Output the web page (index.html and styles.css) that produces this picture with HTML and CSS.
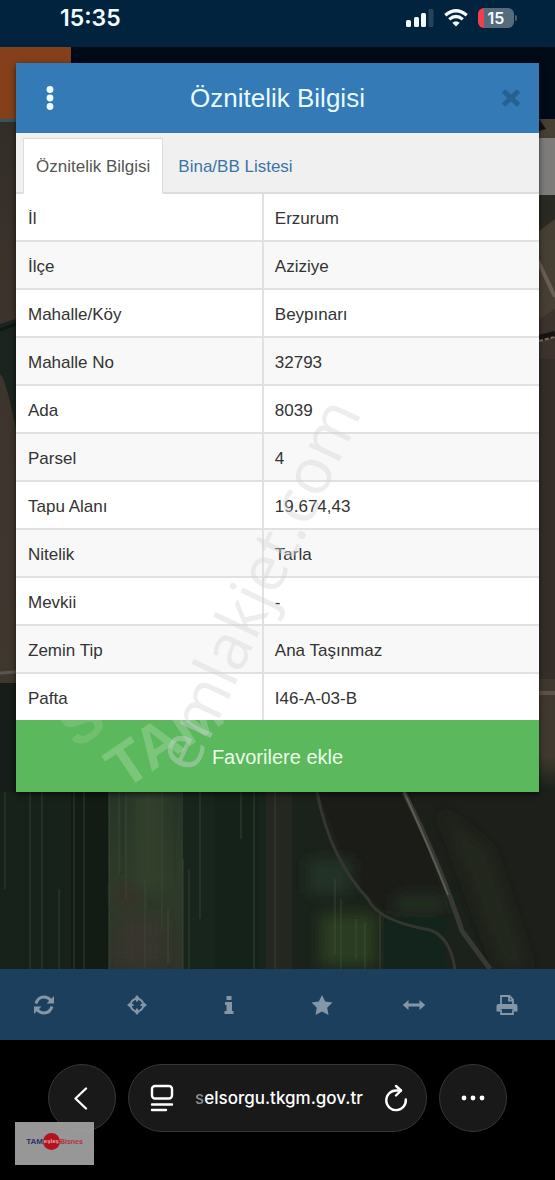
FILE: index.html
```html
<!DOCTYPE html>
<html lang="tr">
<head>
<meta charset="utf-8">
<meta name="viewport" content="width=device-width, initial-scale=1">
<title>Öznitelik Bilgisi</title>
<link rel="stylesheet" href="styles.css">
</head>
<body>
<header class="status">
  <time class="clock">15:35</time>
  <div class="indicators">
    <svg width="28" height="18" viewBox="0 0 28 18" aria-hidden="true">
      <g fill="#f2fbff"><rect x="0" y="11" width="5" height="7" rx="1.5"/><rect x="8" y="8" width="5" height="10" rx="1.5"/><rect x="15" y="4" width="5" height="14" rx="1.5"/></g>
      <rect x="22.500" y="0" width="5" height="18" rx="1.500" fill="#26435a"/>
    </svg>
    <svg width="24" height="18" viewBox="0 0 24 18" fill="none" stroke="#f2fbff" stroke-width="3.200" aria-hidden="true">
      <path d="M1.300 6.300Q12-2.800 22.700 6.300"/><path d="M5.200 10.400Q12 4.600 18.800 10.400"/><path d="M12 17.500L8.300 13.700Q12 10.700 15.700 13.700Z" fill="#f2fbff" stroke="none"/>
    </svg>
    <div class="battery"><span class="level">15</span></div>
  </div>
</header>

<main class="map">
  <div class="topstrip"><div class="brand"></div></div>
  <svg class="terrain" viewBox="0 0 555 850" preserveAspectRatio="none" aria-hidden="true">
    <defs>
      <linearGradient id="soil" x1="0" y1="0" x2="0" y2="1">
        <stop offset="0" stop-color="#322e27"/><stop offset=".2" stop-color="#3d332d"/><stop offset=".75" stop-color="#40392f"/><stop offset=".79" stop-color="#19211a"/><stop offset="1" stop-color="#171d18"/>
      </linearGradient>
      <linearGradient id="field" x1="0" y1="0" x2="0" y2="1">
        <stop offset="0" stop-color="#263528"/><stop offset=".5" stop-color="#2e3b29"/><stop offset="1" stop-color="#303329"/>
      </linearGradient>
      <filter id="soft" x="-40%" y="-40%" width="180%" height="180%"><feGaussianBlur stdDeviation="7"/></filter>
    </defs>
    <rect width="555" height="850" fill="url(#soil)"/>
    <path d="M0 205L16 200V310Q6 260 0 255Z" fill="#1b241e"/>
    <path d="M0 211L16 205" stroke="#111713" stroke-width="3"/>
    <path d="M0 554L16 553" stroke="#5b574f" stroke-width="3"/>
    <path d="M0 564H16V680H0Z" fill="#171d18"/>
    <path d="M539 0H555V190L539 200Z" fill="#463f33"/>
    <path d="M539 0L546 10L539 12Z" fill="#12100d"/>
    <path d="M539 76H555V100L539 112Z" fill="#292a22"/>
    <path d="M538 142L555 178" stroke="#6a5e51" stroke-width="4"/>
    <path d="M539 219L555 215" stroke="#17140f" stroke-width="6"/>
    <path d="M539 222L555 218" stroke="#77705f" stroke-width="2" stroke-dasharray="4 2"/>
    <path d="M539 240H555V560H539Z" fill="#352e28"/>
    <path d="M539 574H555" stroke="#5e5149" stroke-width="4"/>
    <rect x="0" y="673" width="110" height="177" fill="#17221b"/>
    <rect x="71" y="673" width="37" height="177" fill="#121b14"/>
    <rect x="109" y="673" width="74" height="177" fill="url(#field)"/>
    <g filter="url(#soft)">
      <rect x="120" y="800" width="42" height="44" fill="#38352d"/>
      <rect x="116" y="765" width="22" height="22" fill="#38332a"/>
      <rect x="135" y="670" width="28" height="100" fill="#30412b"/>
    </g>
    <rect x="183" y="673" width="83" height="177" fill="#18251c"/>
    <rect x="215" y="673" width="44" height="177" fill="#15221a"/>
    <rect x="266" y="673" width="26" height="177" fill="#242620"/>
    <rect x="292" y="673" width="263" height="177" fill="#1b221b"/>
    <path d="M318 673H410L450 800L380 790L350 755Z" fill="#1b1c18"/>
    <path d="M410 673H555V850H490Z" fill="#1c1f1a"/>
    <g filter="url(#soft)">
      <rect x="308" y="740" width="44" height="35" fill="#243027"/>
      <rect x="320" y="795" width="56" height="52" fill="#2b3e20"/>
      <rect x="395" y="775" width="50" height="20" fill="#202d20"/>
      <path d="M440 690L490 730L530 850H500Z" fill="#22251f"/>
    </g>
    <rect x="384" y="798" width="62" height="52" fill="#13241d"/>
    <g stroke="#3e4b38" stroke-width="1" opacity=".75">
      <path d="M5 673V770M30 673V850M42 673V850M59 770V850M74 673V850M84 673V850M109 673V850M119 673V755M126 673V780M162 673V810M145 760V850M183 740V850M200 673V800M189 750V850M241 673V720M254 673V850M275 673V850"/>
    </g>
    <g stroke="#51603c" stroke-width="1" opacity=".5"><path d="M335 760V835M341 780V850M356 800V840M365 803V850M380 795V850M168 790V845"/></g>
    <path d="M317 673Q330 740 368 780Q378 802 430 811Q450 818 455 850" fill="none" stroke="#35362f" stroke-width="3"/>
    <path d="M404 673Q440 745 462 812L490 850" fill="none" stroke="#383933" stroke-width="5"/>
    <path d="M404 673Q430 730 448 776" fill="none" stroke="#5d5a52" stroke-width="2"/>
  </svg>
  <div class="sidepanel"></div>

  <section class="dialog" aria-labelledby="dialog-title">
    <div class="dialog-head">
      <button class="head-btn" aria-label="Menü"><svg width="8" height="24" viewBox="0 0 8 24" fill="#eefcff"><circle cx="4" cy="3.500" r="3.400"/><circle cx="4" cy="12" r="3.400"/><circle cx="4" cy="20.500" r="3.400"/></svg></button>
      <h1 class="dialog-title" id="dialog-title">Öznitelik Bilgisi</h1>
      <button class="head-btn close" aria-label="Kapat"><svg width="20" height="20" viewBox="0 0 20 20" fill="none" stroke="#28608f" stroke-width="5"><path d="M2.500 3L17.500 17M17.500 3L2.500 17"/></svg></button>
    </div>
    <div class="tabs" role="tablist">
      <button class="tab active" role="tab" aria-selected="true">Öznitelik Bilgisi</button>
      <button class="tab" role="tab" aria-selected="false">Bina/BB Listesi</button>
    </div>
    <table class="attributes">
      <tbody>
        <tr><th scope="row">İl</th><td>Erzurum</td></tr>
        <tr><th scope="row">İlçe</th><td>Aziziye</td></tr>
        <tr><th scope="row">Mahalle/Köy</th><td>Beypınarı</td></tr>
        <tr><th scope="row">Mahalle No</th><td>32793</td></tr>
        <tr><th scope="row">Ada</th><td>8039</td></tr>
        <tr><th scope="row">Parsel</th><td>4</td></tr>
        <tr><th scope="row">Tapu Alanı</th><td>19.674,43</td></tr>
        <tr><th scope="row">Nitelik</th><td>Tarla</td></tr>
        <tr><th scope="row">Mevkii</th><td>-</td></tr>
        <tr><th scope="row">Zemin Tip</th><td>Ana Taşınmaz</td></tr>
        <tr><th scope="row">Pafta</th><td>I46-A-03-B</td></tr>
      </tbody>
    </table>
    <button class="favorite">Favorilere ekle</button>
    <svg class="watermark" viewBox="0 0 523 728" aria-hidden="true">
      <text class="mark-bold" transform="translate(108 727) rotate(-34)">TAM</text>
      <text class="mark-faint" transform="translate(60 686) rotate(-34)">S</text>
      <text class="mark" transform="translate(177 712) rotate(-65)">emlakjet.com</text>
    </svg>
  </section>
</main>

<nav class="toolbar" aria-label="Harita araçları">
  <button class="tool" aria-label="Yenile"><svg width="20" height="20" viewBox="0 0 20 20"><g fill="none" stroke="currentColor" stroke-width="3"><path d="M2 8.500Q4 2 10 2Q14 2 17 5.500"/><path d="M18 11.500Q16 18 10 18Q6 18 3 14.500"/></g><path d="M20 1V8.500H12.500ZM0 19V11.500H7.500Z" fill="currentColor"/></svg></button>
  <button class="tool" aria-label="Konum"><svg width="20" height="20" viewBox="0 0 20 20"><circle cx="10" cy="10" r="6.300" fill="none" stroke="currentColor" stroke-width="2"/><path d="M10 1V6.500M10 13.500V19M1 10H6.500M13.500 10H19" stroke="currentColor" stroke-width="2"/><path d="M10 0L12.500 3H7.500ZM10 20L7.500 17H12.500ZM0 10L3 7.500V12.500ZM20 10L17 12.500V7.500Z" fill="currentColor"/></svg></button>
  <button class="tool" aria-label="Bilgi"><svg width="20" height="20" viewBox="0 0 20 20" fill="currentColor"><path d="M7.500 1H12.500V5H7.500ZM6 7H13V16H14.500V19H5.500V16H7.500V10H6Z"/></svg></button>
  <button class="tool" aria-label="Favoriler"><svg width="22" height="20" viewBox="0 0 22 20" fill="currentColor"><path d="M11 0L14.200 6.600L21.500 7.600L16.200 12.700L17.500 20L11 16.500L4.500 20L5.800 12.700L.5 7.600L7.800 6.600Z"/></svg></button>
  <button class="tool" aria-label="Ölçüm"><svg width="24" height="20" viewBox="0 0 24 20"><path d="M4 10H20" stroke="currentColor" stroke-width="3"/><path d="M6.500 5V15L.8 10ZM17.500 5V15L23.200 10Z" fill="currentColor"/></svg></button>
  <button class="tool" aria-label="Yazdır"><svg width="22" height="20" viewBox="0 0 22 20"><path d="M5 9V1H13.500L17 4.500V9M13 1V5.500H17" fill="none" stroke="currentColor" stroke-width="1.800"/><path d="M2.500 9H19.500Q21.500 9 21.500 11V16.500H17.500V14H4.500V16.500H.5V11Q.5 9 2.500 9Z" fill="currentColor"/><path d="M5 14.500V19H17V14.500" fill="none" stroke="currentColor" stroke-width="1.800"/></svg></button>
</nav>

<footer class="browser">
  <button class="round" aria-label="Geri"><svg width="18" height="24" viewBox="0 0 18 24" fill="none" stroke="#fff" stroke-width="2.300" stroke-linecap="round" stroke-linejoin="round"><path d="M13 2.500L2.500 12.500L13 22.500"/></svg></button>
  <div class="address">
    <button class="plain" aria-label="Sayfa menüsü"><svg width="24" height="28" viewBox="0 0 24 28" fill="none" stroke="#fff" stroke-width="2.400" stroke-linecap="round"><rect x="2" y="2" width="20" height="12.500" rx="3"/><path d="M2 20.500H22M2 26H16"/></svg></button>
    <span class="url"><span class="fade">s</span>elsorgu.tkgm.gov.tr</span>
    <button class="plain" aria-label="Yeniden yükle"><svg width="24" height="28" viewBox="0 0 24 28" fill="none" stroke="#fff" stroke-width="2.400" stroke-linecap="round" stroke-linejoin="round"><path d="M21.800 15.500A9.800 9.800 0 1 1 12 6.500H17"/><path d="M12 2L17 6.500L12 11.500"/></svg></button>
  </div>
  <button class="round" aria-label="Diğer"><svg width="24" height="6" viewBox="0 0 24 6" fill="#fff"><circle cx="3" cy="3" r="2.400"/><circle cx="12" cy="3" r="2.400"/><circle cx="21" cy="3" r="2.400"/></svg></button>
  <div class="badge">
    <span class="badge-a">TAM</span><span class="badge-dot">eşleş</span><span class="badge-b">Bisnes</span>
  </div>
</footer>
</body>
</html>
```
FILE: styles.css
```css
* { box-sizing: border-box; }
body {
  margin: 0;
  min-height: 100vh;
  display: flex;
  flex-direction: column;
  background: #000;
  font-family: "Liberation Sans", Arial, sans-serif;
  font-size: 17px;
  color: #333;
}
button {
  margin: 0;
  padding: 0;
  border: 0;
  background: none;
  color: inherit;
  font: inherit;
}
svg { display: block; }

.status {
  height: 47px;
  padding: 0 41px 12px 60px;
  display: flex;
  align-items: center;
  justify-content: space-between;
  background: #02233d;
  color: #f2fbff;
  font-family: Inter, sans-serif;
}
.clock { font-size: 23px; font-weight: 600; }
.indicators { display: flex; align-items: center; gap: 10px; }
.battery {
  position: relative;
  width: 36px;
  height: 20px;
  border-radius: 6px;
  background: linear-gradient(90deg, #f13f4e 6px, #566b7c 6px);
  text-align: center;
}
.battery::after {
  content: "";
  position: absolute;
  left: 37px;
  top: 7px;
  width: 2px;
  height: 6px;
  border-radius: 0 2px 2px 0;
  background: #4a6072;
}
.level { display: block; font-size: 16px; line-height: 20px; font-weight: 600; }

.map {
  position: relative;
  flex: 1;
  padding: 16px 16px 176px;
  background: #171d18;
}
.topstrip {
  position: absolute;
  inset: 0 0 auto;
  z-index: 1;
  height: 72px;
  background: #010b18;
}
.brand {
  width: 71px;
  height: 75px;
  background: #85401b;
  border-bottom: 3px solid #315562;
}
.terrain {
  position: absolute;
  left: 0;
  top: 72px;
  width: 100%;
  height: calc(100% - 72px);
}
.sidepanel {
  position: absolute;
  right: 0;
  top: 91px;
  width: 40px;
  height: 57px;
  background: #7d7c7a;
}

.dialog {
  position: relative;
  z-index: 2;
  background: #fff;
  box-shadow: 0 2px 6px rgba(0, 0, 0, .6);
}
.dialog-head {
  height: 70px;
  padding: 0 18px;
  display: flex;
  align-items: center;
  justify-content: space-between;
  background: #337ab7;
}
.head-btn {
  width: 32px;
  height: 40px;
  display: flex;
  align-items: center;
  justify-content: center;
}
.close { justify-content: flex-end; }
.dialog-title {
  margin: 0;
  font-size: 26px;
  font-weight: 400;
  color: #e8faff;
}
.tabs {
  height: 61px;
  padding: 5px 7px 0;
  display: flex;
  gap: 2px;
  background: #f0f0f0;
  border-bottom: 2px solid #ddd;
}
.tab {
  height: 56px;
  padding: 2px 12px 0;
  border: 1px solid transparent;
  color: #3b75a8;
}
.tab.active {
  background: #fff;
  border-color: #ddd;
  border-bottom-color: #fff;
  color: #555;
}
.attributes {
  width: 100%;
  table-layout: fixed;
  border-spacing: 0;
}
.attributes th,
.attributes td {
  height: 48px;
  padding: 3px 11px 0;
  border-bottom: 2px solid #e1e1e1;
  font-weight: 400;
  text-align: left;
}
.attributes th { width: 47%; padding-left: 12px; }
.attributes td { border-left: 2px solid #e1e1e1; }
.attributes tr:nth-child(even) { background: #f8f8f8; }
.attributes tr:last-child > * { height: 46px; border-bottom: 0; }
.favorite {
  display: block;
  width: 100%;
  height: 72px;
  padding-top: 2px;
  background: #5cb85c;
  color: #eaffea;
  font-size: 20px;
}
.watermark {
  position: absolute;
  inset: 0;
  width: 100%;
  height: 100%;
  pointer-events: none;
}
.mark {
  font-family: "Open Sans", sans-serif;
  font-size: 64px;
  fill: #cfd4d6;
  fill-opacity: .42;
}
.mark-bold,
.mark-faint {
  font-size: 60px;
  font-weight: 700;
  fill: #fff;
  fill-opacity: .2;
}
.mark-faint { fill-opacity: .12; }

.toolbar {
  height: 71px;
  padding: 0 36px 0 32px;
  display: flex;
  justify-content: space-between;
  background: #1c3f5e;
  color: #8596a6;
}
.tool {
  width: 24px;
  display: flex;
  align-items: center;
  justify-content: center;
}

.browser {
  position: relative;
  height: 140px;
  padding: 24px 48px 0;
  display: flex;
  gap: 12px;
  background: #000;
}
.round,
.address {
  height: 68px;
  border: 1px solid #363636;
  border-radius: 34px;
  background: #191919;
}
.round {
  width: 68px;
  display: flex;
  align-items: center;
  justify-content: center;
}
.address {
  flex: 1;
  padding: 0 18px 0 21px;
  display: flex;
  align-items: center;
  justify-content: space-between;
}
.url {
  color: #fff;
  font-family: Inter, sans-serif;
  font-size: 17px;
  font-weight: 500;
}
.fade { opacity: .5; }
.badge {
  position: absolute;
  left: 15px;
  bottom: 15px;
  width: 79px;
  height: 43px;
  padding-bottom: 4px;
  display: flex;
  align-items: center;
  justify-content: center;
  background: rgba(163, 163, 163, .93);
  font-size: 7px;
  font-weight: 700;
}
.badge-a { color: #28306f; font-size: 8px; }
.badge-dot {
  width: 17px;
  height: 17px;
  border-radius: 50%;
  background: #b5121f;
  color: #e3a9ad;
  font-size: 6px;
  line-height: 16px;
  text-align: center;
}
.badge-b { color: #b3343c; }
```
